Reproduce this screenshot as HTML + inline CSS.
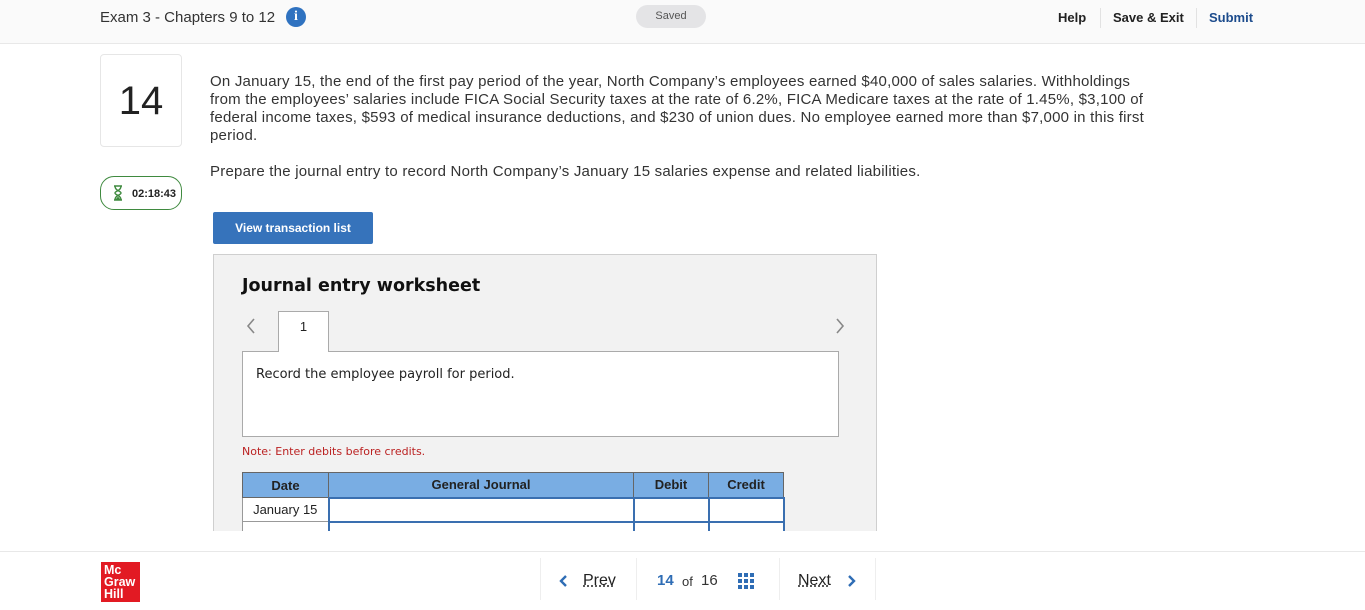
<!DOCTYPE html>
<html><head><meta charset="utf-8"><style>
*{box-sizing:border-box;margin:0;padding:0}
body{width:1365px;height:610px;overflow:hidden;background:#fff;font-family:"Liberation Sans",sans-serif;color:#222;position:relative}
.hdr{position:absolute;left:0;top:0;width:1365px;height:44px;background:#fafafa;border-bottom:1px solid #e8e8e8}
.abs{position:absolute}
.main{position:absolute;left:0;top:44px;width:1365px;height:487px;overflow:hidden}
.ftr{position:absolute;left:0;top:551px;width:1365px;height:59px;border-top:1px solid #e8e8e8;background:#fff}
p.q{font-size:15px;line-height:18px;color:#333;letter-spacing:0.22px}
table{border-collapse:collapse;font-size:13px}
</style></head><body>
<div class="hdr">
 <div class="abs" style="left:100px;top:9px;font-size:15px;color:#333">Exam 3 - Chapters 9 to 12</div>
 <div class="abs" style="left:286px;top:7px;width:20px;height:20px;border-radius:50%;background:#2f72c0;color:#fff;font:bold 14px 'Liberation Serif',serif;text-align:center;line-height:20px">i</div>
 <div class="abs" style="left:636px;top:5px;width:70px;height:23px;border-radius:12px;background:#e4e4e6;font-size:11px;color:#555;text-align:center;line-height:23px">Saved</div>
 <div class="abs" style="left:1058px;top:10px;font-size:13px;font-weight:bold;color:#222">Help</div>
 <div class="abs" style="left:1100px;top:8px;width:1px;height:20px;background:#e2e2e2"></div>
 <div class="abs" style="left:1113px;top:10px;font-size:13px;font-weight:bold;color:#222">Save &amp; Exit</div>
 <div class="abs" style="left:1196px;top:8px;width:1px;height:20px;background:#e2e2e2"></div>
 <div class="abs" style="left:1209px;top:10px;font-size:13px;font-weight:bold;color:#1c4b8c">Submit</div>
</div>
<div class="main">
 <div class="abs" style="left:100px;top:10px;width:82px;height:93px;border:1px solid #e6e6e6;border-radius:4px;font-size:40px;text-align:center;line-height:93px;color:#222">14</div>
 <div class="abs" style="left:100px;top:132px;width:82px;height:34px;border:1px solid #3f8a3f;border-radius:14px;background:#fff">
  <svg class="abs" style="left:12px;top:8px" width="10" height="16" viewBox="0 0 10 16"><path d="M1 1h8M1 15h8M2 1c0 5 6 5 6 7s-6 2-6 7M8 1c0 5-6 5-6 7s6 2 6 7" fill="none" stroke="#3f8a3f" stroke-width="1.4"/><path d="M2.5 14.5h5l-2.5-3z" fill="#3f8a3f"/></svg>
  <div class="abs" style="left:31px;top:11px;font-size:11px;font-weight:bold;color:#222">02:18:43</div>
 </div>
 <div class="abs" style="left:210px;top:29px;width:945px"><p class="q">On January 15, the end of the first pay period of the year, North Company’s employees earned $40,000 of sales salaries. Withholdings from the employees’ salaries include FICA Social Security taxes at the rate of 6.2%, FICA Medicare taxes at the rate of 1.45%, $3,100 of federal income taxes, $593 of medical insurance deductions, and $230 of union dues. No employee earned more than $7,000 in this first period.</p>
 <p class="q" style="margin-top:18px">Prepare the journal entry to record North Company’s January 15 salaries expense and related liabilities.</p></div>
 <div class="abs" style="left:213px;top:168px;width:160px;height:32px;background:#3673bb;color:#fff;font-size:12px;font-weight:bold;text-align:center;line-height:32px;border-radius:2px">View transaction list</div>
 <div class="abs" style="left:213px;top:210px;width:664px;height:300px;background:#f2f2f2;border:1px solid #cfcfcf">
  <div class="abs" style="left:28px;top:21px;font-size:17.5px;font-weight:bold;font-family:'DejaVu Sans',sans-serif;color:#111">Journal entry worksheet</div>
  <svg class="abs" style="left:31px;top:62px" width="12" height="18"><path d="M9 2L3 9l6 7" fill="none" stroke="#888" stroke-width="1.6"/></svg>
  <svg class="abs" style="left:620px;top:62px" width="12" height="18"><path d="M3 2l6 7-6 7" fill="none" stroke="#888" stroke-width="1.6"/></svg>
  <div class="abs" style="left:64px;top:56px;width:51px;height:41px;background:#fff;border:1px solid #aaa;border-bottom:none;font-size:13px;text-align:center;line-height:30px;z-index:2">1</div>
  <div class="abs" style="left:28px;top:96px;width:597px;height:86px;background:#fff;border:1px solid #aaa">
   <div class="abs" style="left:13px;top:15px;font-size:13px;font-family:'DejaVu Sans',sans-serif">Record the employee payroll for period.</div></div>
  <div class="abs" style="left:28px;top:190px;font-size:11px;color:#b22;font-family:'DejaVu Sans',sans-serif">Note: Enter debits before credits.</div>
  <table class="abs" style="left:28px;top:217px">
   <tr style="background:#79ade3;height:25px;font-weight:bold"><td style="width:86px;border:1px solid #666;text-align:center">Date</td><td style="width:305px;border:1px solid #666;text-align:center">General Journal</td><td style="width:75px;border:1px solid #666;text-align:center">Debit</td><td style="width:75px;border:1px solid #666;text-align:center">Credit</td></tr>
   <tr style="height:24px;background:#fff"><td style="border:1px solid #999;text-align:center">January 15</td><td style="border:2px solid #3a6fb0"></td><td style="border:2px solid #3a6fb0"></td><td style="border:2px solid #3a6fb0"></td></tr>
   <tr style="height:24px;background:#fff"><td style="border:1px solid #999"></td><td style="border:2px solid #3a6fb0"></td><td style="border:2px solid #3a6fb0"></td><td style="border:2px solid #3a6fb0"></td></tr>
  </table>
 </div>
</div>
<div class="ftr">
 <div class="abs" style="left:101px;top:10px;width:39px;height:40px;background:#e21a23;color:#fff;font-size:12.5px;font-weight:bold;line-height:12px;padding:2px 0 0 3px">Mc<br>Graw<br>Hill</div>
 <div class="abs" style="left:540px;top:6px;width:1px;height:42px;background:#eee"></div>
 <svg class="abs" style="left:559px;top:22px" width="10" height="14"><path d="M7 2L2 7l5 5" fill="none" stroke="#2f6db5" stroke-width="2.4"/></svg>
 <div class="abs" style="left:583px;top:20px;font-size:16px;color:#222;text-decoration:underline dotted">Prev</div>
 <div class="abs" style="left:636px;top:6px;width:1px;height:42px;background:#eee"></div>
 <div class="abs" style="left:657px;top:20px;font-size:15px;font-weight:bold;color:#2f6db5">14</div>
 <div class="abs" style="left:682px;top:22px;font-size:13px;color:#333">of</div>
 <div class="abs" style="left:701px;top:20px;font-size:15px;color:#333">16</div>
 <svg class="abs" style="left:738px;top:21px" width="16" height="16"><g fill="#2f6db5"><rect x="0" y="0" width="4" height="4"/><rect x="6" y="0" width="4" height="4"/><rect x="12" y="0" width="4" height="4"/><rect x="0" y="6" width="4" height="4"/><rect x="6" y="6" width="4" height="4"/><rect x="12" y="6" width="4" height="4"/><rect x="0" y="12" width="4" height="4"/><rect x="6" y="12" width="4" height="4"/><rect x="12" y="12" width="4" height="4"/></g></svg>
 <div class="abs" style="left:779px;top:6px;width:1px;height:42px;background:#eee"></div>
 <div class="abs" style="left:798px;top:20px;font-size:16px;color:#222;text-decoration:underline dotted">Next</div>
 <svg class="abs" style="left:846px;top:22px" width="10" height="14"><path d="M3 2l5 5-5 5" fill="none" stroke="#2f6db5" stroke-width="2.4"/></svg>
 <div class="abs" style="left:875px;top:6px;width:1px;height:42px;background:#eee"></div>
</div>
</body></html>
